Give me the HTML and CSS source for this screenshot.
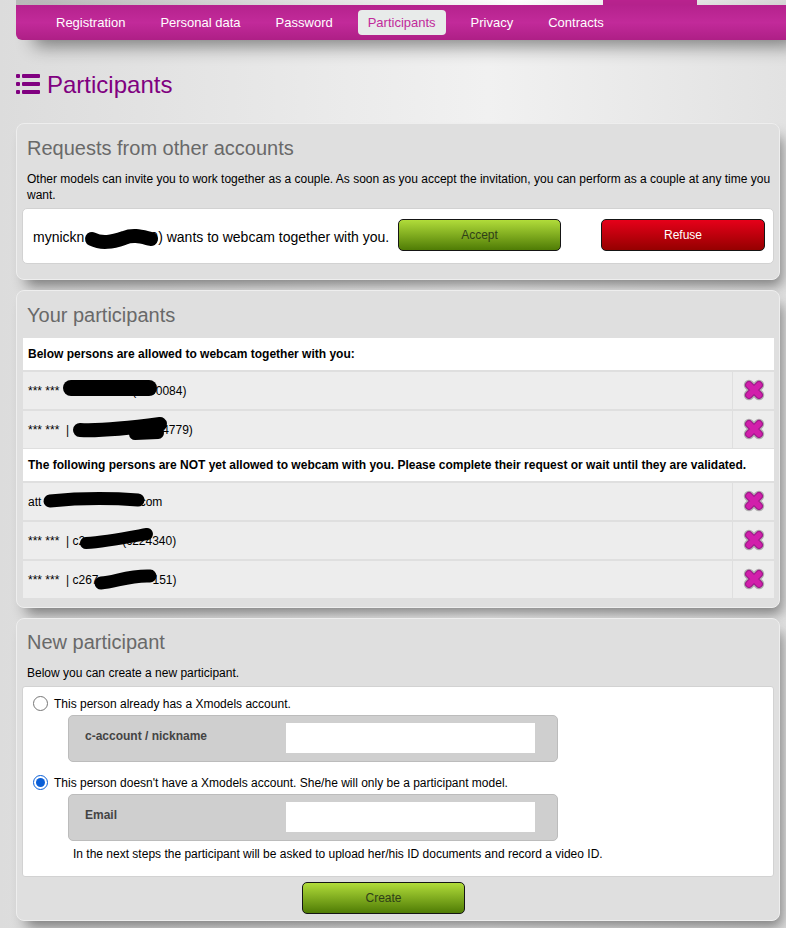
FILE: index.html
```html
<!DOCTYPE html>
<html lang="en">
<head>
  <meta charset="UTF-8">
  <title>Participants</title>
  <link rel="stylesheet" href="styles.css">
</head>
<body>

  <!-- top strip + menu -->
  <div class="top-strip"><div class="top-tab"></div></div>
  <nav class="menu">
    <a href="#">Registration</a>
    <a href="#">Personal data</a>
    <a href="#">Password</a>
    <a href="#" class="active">Participants</a>
    <a href="#">Privacy</a>
    <a href="#">Contracts</a>
  </nav>

  <h1 class="page-title">
    <svg class="list-icon" viewBox="0 0 24 20">
      <rect x="0" y="0" width="4" height="4" rx="1"/>
      <rect x="6" y="0" width="18" height="4" rx="1"/>
      <rect x="0" y="8" width="4" height="4" rx="1"/>
      <rect x="6" y="8" width="18" height="4" rx="1"/>
      <rect x="0" y="16" width="4" height="4" rx="1"/>
      <rect x="6" y="16" width="18" height="4" rx="1"/>
    </svg>
    Participants
  </h1>

  <!-- Requests -->
  <section class="panel panel-requests">
    <h2>Requests from other accounts</h2>
    <p class="intro">Other models can invite you to work together as a couple. As soon as you accept the invitation, you can perform as a couple at any time you want.</p>
    <div class="request-box">
      <span class="request-text">mynickn<span class="gap gap-nick"></span>9) wants to webcam together with you.</span>
      <div class="request-buttons">
        <button class="btn btn-green">Accept</button>
        <button class="btn btn-red">Refuse</button>
      </div>
    </div>
  </section>

  <!-- Your participants -->
  <section class="panel panel-list">
    <h2>Your participants</h2>
    <div class="list">
      <div class="list-head">Below persons are allowed to webcam together with you:</div>
      <div class="list-row">
        <div class="row-name">*** ***<span class="gap gap-a"></span>(c200084)</div>
        <div class="row-action"><svg class="x-icon" viewBox="0 0 24 24"><use href="#cross"/></svg></div>
      </div>
      <div class="list-row">
        <div class="row-name">*** *** &nbsp;|<span class="gap gap-b"></span>4779)</div>
        <div class="row-action"><svg class="x-icon" viewBox="0 0 24 24"><use href="#cross"/></svg></div>
      </div>
      <div class="list-head list-head-second">The following persons are NOT yet allowed to webcam with you. Please complete their request or wait until they are validated.</div>
      <div class="list-row">
        <div class="row-name">att<span class="gap gap-c"></span>.com</div>
        <div class="row-action"><svg class="x-icon" viewBox="0 0 24 24"><use href="#cross"/></svg></div>
      </div>
      <div class="list-row">
        <div class="row-name">*** *** &nbsp;| c2<span class="gap gap-d"></span>(c224340)</div>
        <div class="row-action"><svg class="x-icon" viewBox="0 0 24 24"><use href="#cross"/></svg></div>
      </div>
      <div class="list-row">
        <div class="row-name">*** *** &nbsp;| c267<span class="gap gap-e"></span>151)</div>
        <div class="row-action"><svg class="x-icon" viewBox="0 0 24 24"><use href="#cross"/></svg></div>
      </div>
    </div>
  </section>

  <!-- New participant -->
  <section class="panel panel-new">
    <h2>New participant</h2>
    <p class="intro">Below you can create a new participant.</p>
    <form class="new-box">
      <label class="radio-line"><input type="radio" name="kind"> <span>This person already has a Xmodels account.</span></label>
      <div class="field">
        <span class="field-label">c-account / nickname</span>
        <input type="text" class="field-input">
      </div>
      <label class="radio-line radio-second"><input type="radio" name="kind" checked> <span>This person doesn't have a Xmodels account. She/he will only be a participant model.</span></label>
      <div class="field">
        <span class="field-label">Email</span>
        <input type="text" class="field-input">
      </div>
      <p class="note">In the next steps the participant will be asked to upload her/his ID documents and record a video ID.</p>
    </form>
    <div class="create-line"><button class="btn btn-green">Create</button></div>
  </section>

  <!-- shared cross icon -->
  <svg class="defs">
    <defs>
      <g id="cross" fill="none" stroke-linecap="round">
        <path d="M7 7 L17 17 M17 7 L7 17" stroke="#b0b0b0" stroke-width="10.5"/>
        <path d="M7 7 L17 17 M17 7 L7 17" stroke="#a01a8c" stroke-width="8"/>
        <path d="M7 7 L17 17 M17 7 L7 17" stroke="#d21fab" stroke-width="5.5"/>
      </g>
    </defs>
  </svg>

  <!-- zwarte vlekken over de namen -->
  <svg class="redactions" viewBox="0 0 786 928">
    <g fill="none" stroke="#000" stroke-linecap="round" stroke-linejoin="round">
      <path d="M92 239 C102 244 112 242 124 238 C134 234 142 237 151 239" stroke-width="14"/>
      <path d="M71 388 L149 388" stroke-width="16"/>
      <path d="M80 430 C100 431 130 428 160 424" stroke-width="14"/>
      <path d="M135 434 L158 433" stroke-width="12"/>
      <path d="M50 501 C80 498 110 498 138 500" stroke-width="13"/>
      <path d="M86 543 C105 542 125 538 147 534" stroke-width="12"/>
      <path d="M101 583 C115 582 130 575 150 576" stroke-width="13"/>
    </g>
  </svg>

</body>
</html>
```

FILE: styles.css
```css
body {
  margin: 0;
  height: 928px;
  overflow: hidden;
  position: relative;
  font-family: "Liberation Sans", Arial, sans-serif;
  font-size: 12px;
  color: #000;
  background: linear-gradient(90deg, #dcdcdc 0%, #f1f1f1 62%, #e2e2e2 100%);
}

/* ---------- top ---------- */
.top-strip {
  height: 5px;
  margin-left: 16px;
  background: linear-gradient(90deg, #b8b8b8 0%, #ffffff 65%, #d8d8d8 100%);
}
.top-tab {
  width: 94px;
  height: 5px;
  margin-left: 587px;
  background: #b9238f;
}

.menu {
  display: flex;
  align-items: center;
  gap: 15px;
  height: 35px;
  margin-left: 16px;
  padding-left: 30px;
  border-radius: 0 0 0 6px;
  background: linear-gradient(180deg, #b5228d 0%, #c22a9a 50%, #ae1f86 100%);
  box-shadow: 14px 10px 18px -4px rgba(0,0,0,0.45);
}
.menu a {
  display: block;
  height: 25px;
  line-height: 25px;
  padding: 0 10px;
  border-radius: 4px;
  color: #fff;
  font-size: 13px;
  text-decoration: none;
}
.menu a.active {
  background: #e8ebea;
  color: #c12a9b;
}

.page-title {
  display: flex;
  align-items: center;
  gap: 7px;
  height: 30px;
  margin: 30px 0 23px 16px;
  font-size: 24px;
  font-weight: normal;
  color: #800080;
}
.list-icon {
  width: 24px;
  height: 20px;
  margin-top: -3px;
  fill: #800080;
}

/* ---------- panels ---------- */
.panel {
  margin: 0 6px 10px 16px;
  padding: 0 5px;
  box-sizing: border-box;
  border: 1px solid #eeeeee;
  border-radius: 8px;
  background: #dfdfdf;
  box-shadow: 6px 10px 14px -4px rgba(0,0,0,0.45);
}
.panel h2 {
  margin: 0 0 0 5px;
  height: 47px;
  line-height: 49px;
  font-size: 20px;
  font-weight: normal;
  color: #696969;
}
.intro {
  margin: 0 0 0 5px;
  line-height: 16px;
}

.panel-requests { height: 157px; }
.panel-list { height: 318px; }
.panel-new { height: 303px; }
.panel-new h2 {
  height: 46px;
  line-height: 46px;
}

/* ---------- requests ---------- */
.request-box {
  display: flex;
  align-items: center;
  height: 56px;
  margin-top: 5px;
  padding: 0 8px 0 10px;
  border: 1px solid #d2d2d2;
  border-radius: 5px;
  box-sizing: border-box;
  background: #fff;
}
.request-text {
  font-size: 14px;
  margin-top: 2px;
  white-space: nowrap;
}
.request-buttons {
  display: flex;
  gap: 40px;
  margin-left: auto;
  margin-top: -3px;
}
.gap {
  display: inline-block;
}
.gap-nick { width: 66px; }
.gap-a { width: 73px; }
.gap-b { width: 93px; }
.gap-c { width: 95px; }
.gap-d { width: 37px; }
.gap-e { width: 54px; }

.btn {
  width: 164px;
  height: 32px;
  padding: 0;
  border: 1px solid #151515;
  border-radius: 5px;
  font-family: inherit;
  font-size: 12px;
}
.btn-green {
  width: 163px;
  background: linear-gradient(180deg, #b1dc3a 0%, #4f7c05 100%);
  color: #2f4018;
}
.btn-red {
  background: linear-gradient(180deg, #e60019 0%, #950000 100%);
  color: #fff;
}

/* ---------- participant list ---------- */
.list {
  margin-left: 1px;
}
.list-head {
  height: 32px;
  line-height: 32px;
  padding-left: 5px;
  background: #fff;
  font-weight: bold;
}
.list-head-second {
  margin-top: 1px;
}
.list-row {
  display: flex;
  height: 37px;
  margin-top: 2px;
  background: #ededed;
}
.row-name {
  flex: 1;
  padding-left: 5px;
  line-height: 39px;
}
.row-action {
  display: flex;
  align-items: center;
  justify-content: center;
  width: 41px;
  border-left: 1px solid #dfdfdf;
}
.x-icon {
  width: 24px;
  height: 24px;
  margin-top: -1px;
}
.defs {
  position: absolute;
  width: 0;
  height: 0;
}

/* ---------- new participant ---------- */
.new-box {
  height: 191px;
  margin-top: 5px;
  padding: 7px 0 0 10px;
  box-sizing: border-box;
  border: 1px solid #d2d2d2;
  border-radius: 3px;
  background: #fff;
}
.radio-line {
  display: flex;
  align-items: center;
  gap: 6px;
  height: 18px;
  line-height: 18px;
}
.radio-line span {
  margin-top: 2px;
}
.radio-line input {
  width: 15px;
  height: 15px;
  margin: 0;
  accent-color: #0b5fd7;
}
.radio-second {
  margin-top: 11px;
}
.field {
  display: flex;
  justify-content: space-between;
  box-sizing: border-box;
  width: 490px;
  height: 47px;
  margin: 3px 0 0 35px;
  padding: 7px 22px 0 16px;
  border: 1px solid #bcbcbc;
  border-radius: 5px;
  background: #cfcfcf;
}
.field-label {
  margin-top: 6px;
  font-weight: bold;
  color: #444;
}
.field-input {
  width: 249px;
  height: 30px;
  padding: 0;
  border: 0;
  background: #fff;
}
.note {
  margin: 5px 0 0 40px;
  line-height: 16px;
}
.create-line {
  display: flex;
  margin-top: 5px;
  padding-left: 280px;
}

/* overlay met de vlekken */
.redactions {
  position: absolute;
  top: 0;
  left: 0;
  width: 786px;
  height: 928px;
  pointer-events: none;
}
```
